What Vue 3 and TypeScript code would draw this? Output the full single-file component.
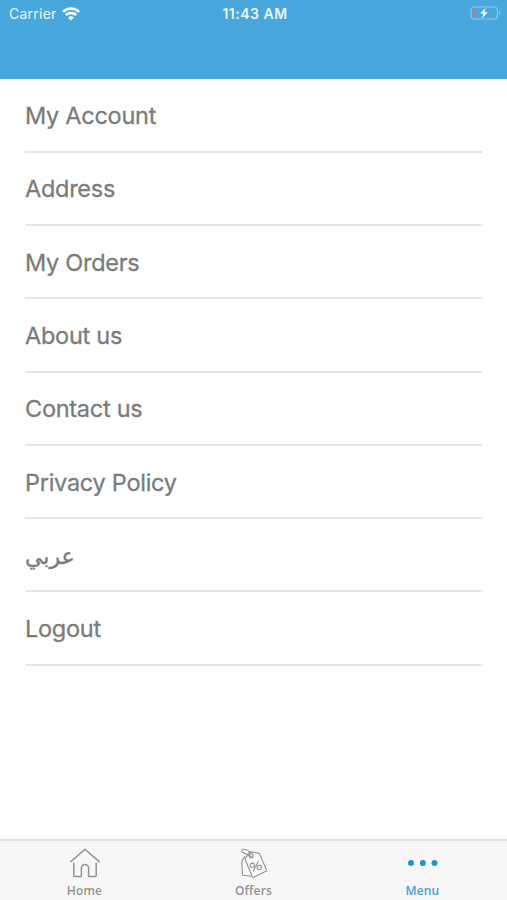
<script setup lang="ts">
interface MenuItem {
  label: string
  lang: string
}

const items: MenuItem[] = [
  { label: 'My Account', lang: 'en' },
  { label: 'Address', lang: 'en' },
  { label: 'My Orders', lang: 'en' },
  { label: 'About us', lang: 'en' },
  { label: 'Contact us', lang: 'en' },
  { label: 'Privacy Policy', lang: 'en' },
  { label: 'عربي', lang: 'ar' },
  { label: 'Logout', lang: 'en' },
]
</script>

<template>
  <div class="screen">
    <header class="header">
      <div class="status">
        <div class="carrier">
          <span>Carrier</span>
          <svg class="wifi" width="18" height="14" viewBox="0 0 18 14">
            <path d="M1 4.8a11.6 11.6 0 0 1 16 0" />
            <path d="M3.8 8a7.5 7.5 0 0 1 10.4 0" />
            <path class="solid" d="M9 13.6 6.1 10.7a4.2 4.2 0 0 1 5.8 0z" />
          </svg>
        </div>
        <span class="time">11:43 AM</span>
        <svg class="battery" width="31" height="14" viewBox="0 0 31 14">
          <rect class="shell" x="1.1" y="1" width="26.2" height="12" rx="3" />
          <path class="tip" d="M29 5v4q1.4-.6 1.4-2T29 5z" />
          <rect class="level" x="2.8" y="2.8" width="2.2" height="8.4" rx=".8" />
          <path class="bolt" d="M15.8 1.8 10.2 7.6h3.3l-1.7 4.8 6-6.1h-3.5z" />
        </svg>
      </div>
    </header>

    <ul class="list">
      <li v-for="item in items" :key="item.label" class="row">
        <span class="label" :class="{ arabic: item.lang === 'ar' }" :lang="item.lang">{{ item.label }}</span>
      </li>
    </ul>

    <nav class="tabs">
      <a class="tab">
        <svg class="icon" width="32" height="32" viewBox="0 0 32 32">
          <path d="M1.8 14.6 16 2.3l14.2 12.3" />
          <path d="M4.8 16.2v12.3q0 1 1 1h5.8q.8 0 .8-.8V21a3.6 3.6 0 0 1 7.2 0v7.7q0 .8.8.8h5.8q1 0 1-1V16.2" />
        </svg>
        <span>Home</span>
      </a>
      <a class="tab">
        <svg class="icon fine" width="32" height="32" viewBox="0 0 32 32">
          <path d="m7.4 11.6 3.6-6q.5-.8 1.4-.7l7.8 1.2q1 .1 1.5 1L28.4 22.8q.4 1-.5 1.5l-12.2 6q-1 .4-1.4-.6L7.3 12.8z" />
          <path d="m6.8 9.6-2.6 3.8q-.4.6-.4 1.2l.6 12.6q0 1 1 1.1l7.6.9" />
          <circle cx="13.2" cy="8.8" r="2" />
          <path d="M13.2 9.2C9.8 9 7.4 6.2 5.2 5.6 3.4 5 3.4 2.4 5.2 2.2c3-.1 6.2 1.8 8 4.4" />
          <circle cx="14.3" cy="18.2" r="2.1" />
          <circle cx="21.3" cy="20.4" r="2.1" />
          <path d="m20.3 14.6-5 9.4" />
        </svg>
        <span>Offers</span>
      </a>
      <a class="tab active">
        <svg class="icon dots" width="32" height="32" viewBox="0 0 32 32">
          <circle cx="4" cy="16" r="3" />
          <circle cx="15.8" cy="16" r="3" />
          <circle cx="27.5" cy="16" r="3" />
        </svg>
        <span>Menu</span>
      </a>
    </nav>
  </div>
</template>

<style>
body {
  margin: 0;
  background: #fff;
}
</style>

<style scoped>
.screen {
  display: flex;
  flex-direction: column;
  height: 900px;
  box-sizing: border-box;
  background: #fff;
  font-family: Inter, 'Noto Sans', 'DejaVu Sans', sans-serif;
  overflow: hidden;
}

.header {
  flex: none;
  height: 79.4px;
  background: #48a7dc;
}

.status {
  display: grid;
  grid-template-columns: 1fr auto 1fr;
  align-items: center;
  height: 27px;
  padding: 0 6px 0 9px;
  color: #e9f7ff;
  font-size: 14px;
  line-height: 27px;
}

.carrier {
  display: flex;
  align-items: center;
  gap: 5px;
  letter-spacing: 0.25px;
}

.wifi {
  fill: none;
  stroke: #fff;
  stroke-width: 2.5;
}

.wifi .solid {
  fill: #fff;
  stroke: none;
}

.time {
  font-weight: 600;
  letter-spacing: 0.5px;
}

.battery {
  justify-self: end;
  margin-bottom: 1px;
}

.shell {
  fill: none;
  stroke: #91c9e9;
  stroke-width: 1.1;
}

.tip {
  fill: #91c9e9;
}

.level {
  fill: #b4798e;
}

.bolt {
  fill: #fff;
}

.list {
  flex: 1;
  margin: 0;
  padding: 0 25px;
  list-style: none;
}

.row {
  display: flex;
  align-items: center;
  box-sizing: border-box;
  height: 73.3px;
  padding-top: 2px;
  border-bottom: 2px solid #e6e6e6;
  color: #7b7b7b;
  font-size: 23.5px;
  font-weight: 400;
}

.label {
  line-height: 30px;
  letter-spacing: -0.27px;
  -webkit-text-stroke: 0.3px currentColor;
}

.arabic {
  padding-top: 2px;
  font-family: 'DejaVu Sans', sans-serif;
  font-size: 22px;
  letter-spacing: 0;
  -webkit-text-stroke-width: 0.4px;
}

.tabs {
  flex: none;
  display: grid;
  grid-template-columns: repeat(3, 1fr);
  box-sizing: border-box;
  height: 61px;
  border-top: 2px solid #e3e3e3;
  background: #f7f7f7;
}

.tab {
  display: flex;
  flex-direction: column;
  align-items: center;
  padding-top: 6px;
  color: #929292;
  font-family: 'Open Sans', 'Noto Sans', sans-serif;
  font-size: 12px;
  font-weight: 600;
  line-height: 16px;
  letter-spacing: 0.15px;
}

.tab span {
  margin-top: 4px;
}

.icon {
  fill: none;
  stroke: #929292;
  stroke-width: 1.5;
  stroke-linecap: round;
  stroke-linejoin: round;
}

.fine {
  stroke-width: 1.1;
}

.dots {
  fill: #2392d0;
  stroke: none;
}

.active {
  color: #3f9fd8;
}
</style>
